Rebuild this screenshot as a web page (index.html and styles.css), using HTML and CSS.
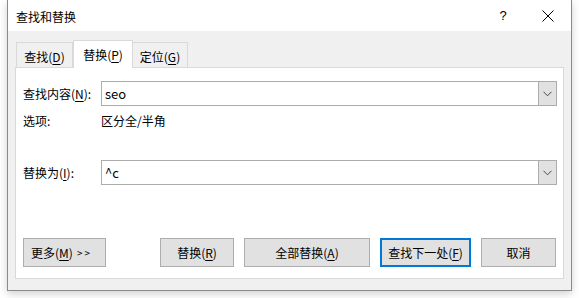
FILE: index.html
```html
<!DOCTYPE html>
<html lang="zh-CN">
<head>
    <meta charset="UTF-8">
    <title>查找和替换</title>

    <link rel="stylesheet" href="styles.css">
</head>
<body>

<div class="page">
    <div class="dialog">
        <div class="dialog__titlebar">
            <span class="dialog__title">查找和替换</span>
            <span class="dialog__help">?</span>
            <span class="dialog__close">
                <svg width="12" height="12" viewBox="0 0 12 12">
                    <path d="M0.5 0.5 L11.5 11.5 M11.5 0.5 L0.5 11.5" stroke="#000" stroke-width="1" fill="none"/>
                </svg>
            </span>
        </div>
        <div class="dialog__body">
            <div class="tabs">
                <div class="tabs__tab">查找(<u>D</u>)</div>
                <div class="tabs__tab tabs__tab--active">替换(<u>P</u>)</div>
                <div class="tabs__tab">定位(<u>G</u>)</div>
            </div>
            <div class="panel">
                <div class="panel__row">
                    <label class="panel__label">查找内容(<u>N</u>):</label>
                    <div class="combo">
                        <span class="combo__value">seo</span>
                        <span class="combo__arrow">
                            <svg width="9" height="6" viewBox="0 0 9 6">
                                <path d="M0.5 0.8 L4.5 4.8 L8.5 0.8" stroke="#444" stroke-width="1" fill="none"/>
                            </svg>
                        </span>
                    </div>
                </div>
                <div class="panel__row panel__row--options">
                    <span class="panel__label">选项:</span>
                    <span class="panel__value">区分全/半角</span>
                </div>
                <div class="panel__row panel__row--replace">
                    <label class="panel__label">替换为(<u>I</u>):</label>
                    <div class="combo">
                        <span class="combo__value">^c</span>
                        <span class="combo__arrow">
                            <svg width="9" height="6" viewBox="0 0 9 6">
                                <path d="M0.5 0.8 L4.5 4.8 L8.5 0.8" stroke="#444" stroke-width="1" fill="none"/>
                            </svg>
                        </span>
                    </div>
                </div>
                <div class="buttons">
                    <button class="button button--more">更多(<u>M</u>) <span class="button__chevrons">&gt;&gt;</span></button>
                    <button class="button button--replace">替换(<u>R</u>)</button>
                    <button class="button button--all">全部替换(<u>A</u>)</button>
                    <button class="button button--next">查找下一处(<u>F</u>)</button>
                    <button class="button button--cancel">取消</button>
                </div>
            </div>
        </div>
    </div>
</div>

</body>
</html>
```

FILE: styles.css
```css
* {
    box-sizing: border-box;
    margin: 0;
    padding: 0;
}

body {
    background: #ffffff;
    font-family: "Noto Sans CJK SC", "Noto Sans", sans-serif;
    font-size: 12px;
    color: #000;
    width: 579px;
    height: 298px;
    overflow: hidden;
}

u {
    text-decoration: underline;
    text-underline-offset: 2px;
}

.page {
    padding-left: 7px;
}

.dialog {
    width: 565px;
    height: 291px;
    border: 1px solid #8a8a8a;
    border-top: none;
    background: #f0f0f0;
    box-shadow: 0 3px 8px rgba(0, 0, 0, .18);
    display: flex;
    flex-direction: column;
}

.dialog__titlebar {
    height: 31px;
    background: #fff;
    display: flex;
    align-items: center;
    padding-left: 8px;
}
.dialog__title {
    flex: 1;
    line-height: 17px;
    padding-top: 1px;
}
.dialog__help {
    width: 14px;
    font-family: "Liberation Sans", sans-serif;
    font-size: 13px;
    margin-right: 32px;
    text-align: center;
}
.dialog__close {
    display: flex;
    width: 12px;
    margin-right: 17px;
}

.dialog__body {
    flex: 1;
    padding: 9px 7px 11px 7px;
    display: flex;
    flex-direction: column;
}

.tabs {
    display: flex;
    align-items: flex-end;
    height: 27px;
    position: relative;
    z-index: 1;
}
.tabs__tab {
    height: 25px;
    border: 1px solid #d9d9d9;
    border-bottom: none;
    background: #f0f0f0;
    display: flex;
    align-items: center;
    justify-content: center;
    white-space: nowrap;
    padding-top: 2px;
}
.tabs__tab:first-child {
    width: 57px;
    margin-left: 1px;
}
.tabs__tab--active {
    width: 60px;
    height: 28px;
    margin-bottom: -1px;
    background: #fff;
    padding-top: 0;
}
.tabs__tab:last-child {
    width: 55px;
    border-left: none;
}

.panel {
    flex: 1;
    background: #fff;
    border: 1px solid #d9d9d9;
    width: 549px;
    padding: 13px 6px 0 7px;
    display: flex;
    flex-direction: column;
}

.panel__row {
    display: flex;
    align-items: center;
}
.panel__row--options {
    margin-top: 6px;
    height: 17px;
}
.panel__row--replace {
    margin-top: 31px;
}
.panel__label {
    width: 78px;
    line-height: 17px;
}
.panel__value {
    line-height: 17px;
}

.combo {
    flex: 1;
    height: 25px;
    border: 1px solid #acacac;
    display: flex;
    align-items: stretch;
}
.combo__value {
    flex: 1;
    padding-left: 3px;
    display: flex;
    align-items: center;
    font-size: 13px;
}
.combo__arrow {
    width: 18px;
    background: #e1e1e1;
    border-left: 1px solid #acacac;
    display: flex;
    align-items: center;
    justify-content: center;
    padding-top: 1px;
}

.buttons {
    display: flex;
    margin-top: 53px;
    height: 29px;
}
.button {
    font-family: inherit;
    font-size: 12px;
    color: #000;
    background: #e1e1e1;
    border: 1px solid #adadad;
    height: 29px;
    display: flex;
    align-items: center;
    justify-content: center;
    white-space: nowrap;
}
.button--more {
    width: 83px;
    justify-content: flex-start;
    padding-left: 7px;
}
.button__chevrons {
    font-size: 10px;
    letter-spacing: 2px;
    margin-left: 4px;
}
.button--replace {
    width: 74px;
    margin-left: 54px;
}
.button--all {
    width: 126px;
    margin-left: 10px;
}
.button--next {
    width: 91px;
    margin-left: 10px;
    border: 2px solid #0078d7;
}
.button--cancel {
    width: 75px;
    margin-left: 10px;
}
```
